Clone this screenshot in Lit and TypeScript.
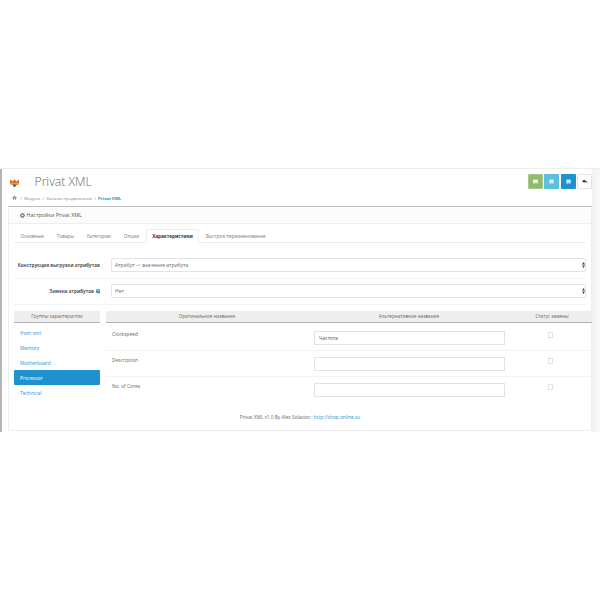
import { LitElement, html, css, svg } from "lit";
import { customElement } from "lit/decorators.js";

const save = svg`<svg class="ic" viewBox="0 0 10 10"><path fill="#fff" d="M1 1h6.500L9 2.500V9H1z"/><path fill="currentColor" d="M3 1.500h3.500V4H3zM3 6h4v3H3z" opacity=".55"/></svg>`;

@customElement("app-root")
export class AppRoot extends LitElement {
  static styles = css`
    :host { display: block; width: 600px; height: 600px; background: #fff; font-family: "Open Sans", "Liberation Sans", sans-serif; color: #666; font-size: 5px; overflow: hidden; }
    .page { margin-top: 168px; height: 264px; box-sizing: border-box; display: flex; border-top: 1px solid #eee; }
    .rail { width: 2px; background: #b4b4b4; flex: none; }
    .main { flex: 1; min-width: 0; padding: 0 0 0 6px; box-sizing: border-box; width: 590px; }
    .scroll { width: 8px; flex: none; background: linear-gradient(90deg, #f1f1f1, #f8f8f8); }
    .header { height: 37px; display: flex; justify-content: space-between; box-sizing: border-box; }
    .brand { display: flex; align-items: flex-start; padding: 9px 0 0 2px; }
    .logo { width: 9px; height: 10px; flex: none; }
    .titles { margin-left: 15.500px; }
    h1 { margin: -3px 0 0; font-size: 12.200px; line-height: 14px; font-weight: 300; color: #666; }
    .crumb { display: flex; align-items: center; gap: 2.300px; margin: 5.500px 0 0 -23px; font-size: 4.250px; line-height: 6px; color: #888; white-space: nowrap; }
    .crumb svg { width: 5px; height: 5px; margin: 0 1.500px 0 0; }
    .crumb b { color: #1e91cf; font-weight: 700; }
    .btns { display: flex; gap: 1.500px; padding: 5px 0 0; height: 15px; }
    .btn { width: 15px; height: 15px; border-radius: 1px; display: flex; align-items: center; justify-content: center; box-sizing: border-box; }
    .ic { width: 5px; height: 5px; }
    .g { background: #8fbb6c; color: #8fbb6c; border: 1px solid #a6c98a; }
    .i { background: #5bc0de; color: #5bc0de; }
    .b { background: #1e91cf; color: #1e91cf; }
    .w { background: #fff; border: 1px solid #e2e2e2; }
    .w svg { width: 6px; height: 5px; }
    .panel { width: 584px; height: 225px; box-sizing: border-box; border: 1px solid #eee; border-top: 1px solid #bdbdbd; }
    .phead { height: 16px; background: #fcfcfc; border-bottom: 1px solid #eee; display: flex; align-items: center; gap: 1.500px; padding: 0 0 0 11px; font-size: 5.300px; color: #555; }
    .phead svg { width: 5px; height: 5px; }
    .body { padding: 5px 5px 0; }
    .tabs { display: flex; height: 13px; border-bottom: 1px solid #eee; }
    .tab { padding: 0 6.500px; display: flex; align-items: center; font-size: 4.680px; color: #777; white-space: nowrap; }
    .tab.on { color: #333; font-weight: 700; border: 1px solid #eee; border-bottom: 1px solid #fff; background: #fff; height: 14px; box-sizing: border-box; margin-bottom: -1px; padding: 0 5.500px; }
    .row { display: grid; grid-template-columns: 86px 1fr; gap: 11px; align-items: center; height: 25.500px; border-bottom: 1px solid #f3f3f3; }
    .first { margin-top: 9px; }
    .lab { font-weight: 700; font-size: 4.600px; color: #555; display: flex; justify-content: flex-end; align-items: center; gap: 1.500px; white-space: nowrap; }
    .lab svg { width: 4.500px; height: 4.500px; }
    .selwrap { position: relative; height: 14px; }
    select { appearance: none; width: 100%; height: 14px; box-sizing: border-box; border: 1px solid #e3e3e3; border-radius: 2px; background: #fff; font: 5px "Open Sans", sans-serif; color: #666; padding: 0 3px; outline: none; }
    .arrows { position: absolute; right: 1.500px; top: 4px; width: 3px; height: 6px; }
    .split { display: grid; grid-template-columns: 86px 1fr; gap: 6px; margin-top: 5.500px; width: 578px; }
    .th { background: #eee; border-bottom: 1px solid #b0b0b0; height: 12px; box-sizing: border-box; display: flex; align-items: center; justify-content: center; font-size: 4.650px; color: #666; white-space: nowrap; }
    .thead .th:first-child { padding-left: 2px; }
    .groups { display: flex; flex-direction: column; margin-top: 2.700px; }
    .gi { height: 15px; display: flex; align-items: center; padding-left: 6px; color: #1e91cf; font-size: 4.950px; box-sizing: border-box; }
    .gi.on { background: #1e91cf; color: #fff; border-radius: 1px; }
    .thead { display: grid; grid-template-columns: 200px 206px 80px; }
    .rows { margin-top: 2px; }
    .tr { display: grid; grid-template-columns: 200px 206px 80px; height: 26px; border-bottom: 1px solid #f3f3f3; box-sizing: border-box; }
    .tr:last-child { border: 0; }
    .name { padding: 6px 0 0 6px; font-size: 4.900px; line-height: 7px; color: #666; }
    .inp { padding: 6.500px 0 0 8px; }
    input[type="text"] { display: block; width: 191px; height: 14px; box-sizing: border-box; border: 1px solid #e2e2e2; background: #fff; font: 5px "Open Sans", sans-serif; color: #555; padding: 0 4px; border-radius: 0; outline: none; }
    .chk { display: flex; justify-content: center; align-items: flex-start; padding-top: 7.700px; padding-right: 3px; }
    input[type="checkbox"] { appearance: none; margin: 0; width: 5.500px; height: 5.500px; border: 1px solid #e2e2e2; box-sizing: border-box; background: #fff; }
    .foot { text-align: center; font-size: 4.750px; color: #666; margin-top: 11px; }
    .foot a { color: #1e91cf; text-decoration: none; }
  `;

  render() {
    const rows = [["Clockspeed", "Частота"], ["Description", ""], ["No. of Cores", ""]];
    const groups = ["from xml", "Memory", "Motherboard", "Processor", "Technical"];
    const tabs = ["Основные", "Товары", "Категории", "Опции", "Характеристики", "Быстрое переименование"];
    const arrows = html`<svg class="arrows" viewBox="0 0 3 6"><path fill="#444" d="M1.500 0 3 2.400H0zM1.500 6 3 3.600H0z"/></svg>`;
    return html`
      <div class="page">
        <div class="rail"></div>
        <div class="main">
          <div class="header">
            <div class="brand">
              <svg class="logo" viewBox="0 0 18 20">
                <path fill="#e8562a" d="M0 3 5 7 9 3 13 7 18 3V10H0z"/>
                <path fill="#f0a020" d="M0 9H18V13L13 14H5L0 13z"/>
                <path fill="#2b6a9e" d="M4 13H14L9 19z"/>
              </svg>
              <div class="titles">
                <h1>Privat XML</h1>
                <div class="crumb">
                  <svg viewBox="0 0 12 12"><path fill="#777" d="M6 1 0 6.500l.8.8L6 2.800l5.200 4.500.8-.8zM2 7.500V11h3V8h2v3h3V7.500L6 4z"/></svg>
                  <span>/</span><span>Модули</span><span>/</span><span>Каналы продвижения</span><span>/</span><b>Privat XML</b>
                </div>
              </div>
            </div>
            <div class="btns">
              <div class="btn g"><svg class="ic" viewBox="0 0 10 10"><path fill="#fff" d="M0 1.500h10v7H0z"/><path fill="#8fbb6c" d="M0 4h10v.7H0zM0 6.300h10V7H0z"/></svg></div>
              <div class="btn i">${save}</div>
              <div class="btn b">${save}</div>
              <div class="btn w"><svg viewBox="0 0 12 10"><path fill="#333" d="M5 1 0 4.500 5 8V5.800c3 0 4.500.8 6 3.200-.4-3.500-2.500-6-6-6z"/></svg></div>
            </div>
          </div>
          <div class="panel">
            <div class="phead">
              <svg viewBox="0 0 10 10"><circle cx="5" cy="5" r="3" fill="none" stroke="#444" stroke-width="1.800"/><circle cx="5" cy="5" r="4.200" fill="none" stroke="#444" stroke-width="1.400" stroke-dasharray="1.650 1.650"/></svg>
              <span>Настройки Privat XML</span>
            </div>
            <div class="body">
              <div class="tabs">
                ${tabs.map((t, i) => html`<div class="tab ${i === 4 ? "on" : ""}">${t}</div>`)}
              </div>
              <div class="row first">
                <div class="lab">Конструкция выгрузки атрибутов</div>
                <div class="selwrap"><select><option>Атрибут -&gt; значение атрибута</option></select>${arrows}</div>
              </div>
              <div class="row">
                <div class="lab">Замена атрибутов
                  <svg viewBox="0 0 10 10"><circle cx="5" cy="5" r="5" fill="#1e91cf"/><path fill="none" stroke="#fff" stroke-width="1.300" d="M3.500 4c0-2 3.200-2 3.200-.2 0 1.200-1.700 1.200-1.700 2.500"/><path fill="#fff" d="M4.300 7h1.400v1.300H4.300z"/></svg>
                </div>
                <div class="selwrap"><select><option>Нет</option></select>${arrows}</div>
              </div>
              <div class="split">
                <div>
                  <div class="th">Группы характеристик</div>
                  <div class="groups">
                    ${groups.map((g, i) => html`<div class="gi ${i === 3 ? "on" : ""}">${g}</div>`)}
                  </div>
                </div>
                <div>
                  <div class="thead">
                    <div class="th">Оригинальное название</div>
                    <div class="th">Альтернативное название</div>
                    <div class="th">Статус замены</div>
                  </div>
                  <div class="rows">
                    ${rows.map(([n, v]) => html`
                      <div class="tr">
                        <div class="name">${n}</div>
                        <div class="inp"><input type="text" .value=${v} /></div>
                        <div class="chk"><input type="checkbox" /></div>
                      </div>`)}
                  </div>
                </div>
              </div>
              <div class="foot">Privat XML v1.0 By Alex Solaviov : <a>http://shop.online.su</a></div>
            </div>
          </div>
        </div>
        <div class="scroll"></div>
      </div>
    `;
  }
}
